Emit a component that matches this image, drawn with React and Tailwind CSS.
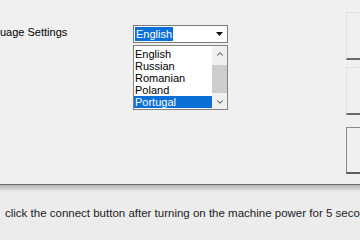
import { ChevronUp, ChevronDown } from "lucide-react";

const languages = ["English", "Russian", "Romanian", "Poland", "Portugal"];
const selected = "Portugal";

const SideButton = ({ className = "" }) => (
  <div
    className={`w-[14px] h-[48px] bg-[#f0f0f0] border-l border-t border-l-[#e2e2e2] border-t-[#e2e2e2] border-b-2 border-b-[#6a6a6a] ${className}`}
  />
);

const LanguageCombo = () => (
  <div className="w-[95px] pt-[25px]">
    <div className="flex h-[18px] items-center border border-[#7a7a7a] bg-white pl-[1px]">
      <span className="bg-[#0a6fd6] px-[1px] text-[11px] leading-[14px] text-white">English</span>
      <svg className="ml-auto mr-[4px]" width="7" height="4" viewBox="0 0 7 4">
        <path d="M0 0h7L3.5 4z" fill="#111" />
      </svg>
    </div>

    <div className="mt-[2px] flex h-[65px] border border-[#828282] bg-white">
      <div className="flex-1 pt-[2px]">
        {languages.map((lang) => (
          <div
            key={lang}
            className={
              lang === selected
                ? "h-[12px] bg-[#0a6fd6] pl-[1px] text-[11px] leading-[12px] text-white"
                : "h-[12px] pl-[1px] text-[11px] leading-[12px] text-black"
            }
          >
            {lang}
          </div>
        ))}
      </div>

      <div className="flex w-[15px] flex-col bg-[#f0f0f0]">
        <div className="flex h-[15px] items-center justify-center">
          <ChevronUp size={10} strokeWidth={2.5} color="#5a5a5a" />
        </div>
        <div className="mt-[4px] h-[28px] bg-[#cdcdcd]" />
        <div className="mt-auto flex h-[15px] items-center justify-center">
          <ChevronDown size={10} strokeWidth={2.5} color="#5a5a5a" />
        </div>
      </div>
    </div>
  </div>
);

export default function App() {
  return (
    <div
      className="flex h-[240px] w-[360px] flex-col overflow-hidden bg-[#f0f0f0] text-black"
      style={{ fontFamily: '"Liberation Sans", Arial, sans-serif' }}
    >
      <div className="flex h-[184px] shrink-0">
        <div className="w-[133px] pt-[26px] text-[11px] leading-[13px] whitespace-nowrap">
          uage Settings
        </div>

        <LanguageCombo />

        <div className="ml-auto flex flex-col pt-[12px]">
          <SideButton />
          <SideButton className="mt-[7px]" />
          <div className="mt-[12px] h-[47px] w-[14px] border-l border-t border-[#8a8a8a] border-b-2 border-b-[#5e5e5e] bg-[#f0f0f0]" />
        </div>
      </div>

      <div className="h-px shrink-0 bg-[#6e6e6e]" />
      <div className="h-[7px] shrink-0 bg-gradient-to-b from-[#b4b4b4] to-[#ececec]" />

      <div className="flex-1 bg-[#ececec] pl-[5px] pt-[14px]">
        <p className="whitespace-nowrap text-[11.5px] leading-[14px] text-[#1c1c1c]">
          click the connect button after turning on the machine power for 5 seconds
        </p>
      </div>
    </div>
  );
}
